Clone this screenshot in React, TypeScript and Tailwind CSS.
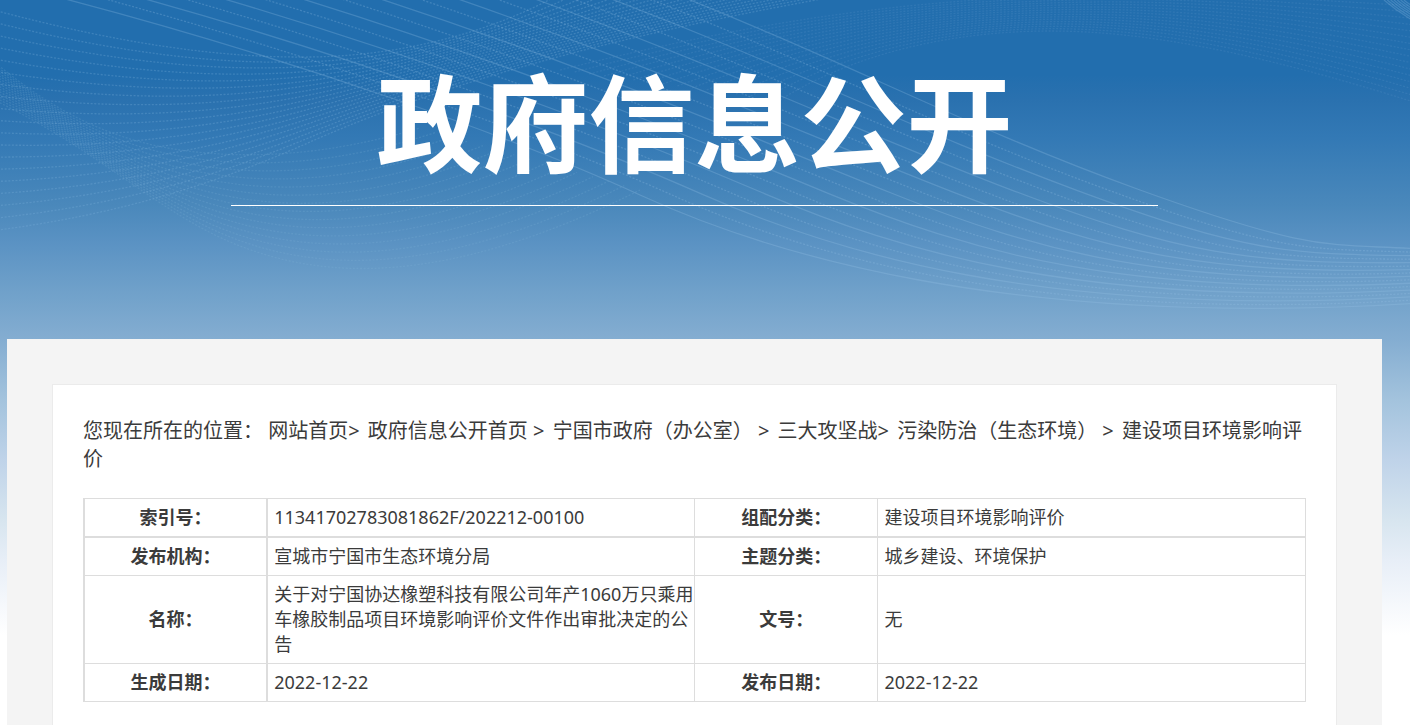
type Curve = number[];

interface Wave {
  from: Curve;
  to: Curve;
  lines: number;
  stroke: string;
  opacity: number;
  solidEvery: number;
}

// Each curve is a start point followed by one C segment and any number of S segments
const WAVES: Wave[] = [
  {
    from: [-10, 9, 120, 44, 220, 58, 310, 57, 490, 33, 560, -6],
    to: [-10, 231, 120, 215, 220, 182, 310, 142, 560, 44, 850, -6],
    lines: 19, stroke: '#7fb4dc', opacity: 0.29, solidEvery: 0,
  },
  {
    from: [640, -20, 850, 62, 960, 125, 1140, 190, 1330, 243, 1420, 249],
    to: [50, -5, 300, 60, 520, 140, 640, 195, 1000, 330, 1420, 303],
    lines: 17, stroke: '#9cc6e6', opacity: 0.26, solidEvery: 2,
  },
  {
    from: [-10, 58, 50, 110, 110, 140, 180, 150, 330, 155, 420, 128],
    to: [-10, 98, 100, 150, 160, 215, 240, 246, 440, 290, 640, 190],
    lines: 15, stroke: '#8cbbe0', opacity: 0.18, solidEvery: 0,
  },
  {
    from: [780, 100, 860, 50, 960, 31, 1050, 31, 1250, 50, 1420, 104],
    to: [560, 70, 760, 20, 900, 2, 1050, -4, 1300, 0, 1420, 6],
    lines: 16, stroke: '#6fa3d2', opacity: 0.18, solidEvery: 0,
  },
  {
    from: [1384, 0, 1392, 7, 1400, 13, 1412, 20],
    to: [1404, 0, 1406, 2, 1408, 3, 1412, 6],
    lines: 7, stroke: '#8cbbe0', opacity: 0.3, solidEvery: 1,
  },
];

const CRUMBS = [
  { label: '网站首页', sep: '> ' },
  { label: '政府信息公开首页', sep: ' > ' },
  { label: '宁国市政府（办公室）', sep: ' > ' },
  { label: '三大攻坚战', sep: '> ' },
  { label: '污染防治（生态环境）', sep: ' > ' },
  { label: '建设项目环境影响评价', sep: '' },
];

const ROWS = [
  ['索引号：', '11341702783081862F/202212-00100', '组配分类：', '建设项目环境影响评价'],
  ['发布机构：', '宣城市宁国市生态环境分局', '主题分类：', '城乡建设、环境保护'],
  ['名称：', '关于对宁国协达橡塑科技有限公司年产1060万只乘用车橡胶制品项目环境影响评价文件作出审批决定的公告', '文号：', '无'],
  ['生成日期：', '2022-12-22', '发布日期：', '2022-12-22'],
];

function curvePath(wave: Wave, i: number) {
  const t = i / (wave.lines - 1);
  const p = wave.from.map((n, k) => (n + (wave.to[k] - n) * t).toFixed(1));
  let d = `M${p[0]} ${p[1]}C${p.slice(2, 8).join(' ')}`;
  for (let k = 8; k < p.length; k += 4) d += `S${p.slice(k, k + 4).join(' ')}`;
  return d;
}

function Waves() {
  return (
    <svg className="absolute inset-x-0 top-0 h-[339px] w-full" viewBox="0 0 1410 339" preserveAspectRatio="xMidYMin slice" fill="none" aria-hidden="true">
      {WAVES.map((wave, w) => (
        <g key={w} stroke={wave.stroke} strokeOpacity={wave.opacity}>
          {Array.from({ length: wave.lines }, (_, i) => (
            <path key={i} d={curvePath(wave, i)} strokeWidth="1.3"
              strokeDasharray={wave.solidEvery && i % wave.solidEvery === 0 ? undefined : '2 1.6'} />
          ))}
        </g>
      ))}
    </svg>
  );
}

export default function App() {
  return (
    <div className="relative flex min-h-screen flex-col bg-white bg-[linear-gradient(#226eae_0px,#226eae_75px,#2a71af_100px,#3379b5_138px,#4a88bb_205px,#5a92c3_242px,#70a1ca_292px,#84add1_339px,#a3c3dd_400px,#bfd3e9_460px,#d7e5ef_520px,#e7eef7_560px,#ffffff_635px)] bg-no-repeat pr-[28px] pl-[7px] font-['Noto_Sans','Noto_Sans_CJK_SC',sans-serif] text-[#3b3b3b]">
      <Waves />
      <header className="relative flex h-[339px] flex-col items-center text-white">
        <h1 className="mt-[42px] mb-[11px] font-['Noto_Sans_CJK_SC',sans-serif] text-[106px] leading-[152px] font-bold">政府信息公开</h1>
        <div className="w-full max-w-[927px] border-t border-white" />
      </header>

      <main className="relative flex flex-1 flex-col bg-[#f4f4f4] px-[45px] pt-[45px]">
        <div className="flex-1 border border-b-0 border-[#ebebeb] bg-white px-[30px] pt-[32px]">
          <nav aria-label="您现在所在的位置" className="text-xl leading-[28px]">
            <span>您现在所在的位置：</span>{' '}
            {CRUMBS.map(c => (
              <span key={c.label}>
                <a href="#" className="hover:text-[#226eae]">{c.label}</a>
                {c.sep && <span className="mr-[3px]">{c.sep}</span>}
              </span>
            ))}
          </nav>

          <table className="mt-[25px] w-full table-fixed border-collapse text-lg leading-[25px]">
            <colgroup>
              <col className="w-[15%]" />
              <col className="w-[35%]" />
              <col className="w-[15%]" />
              <col className="w-[35%]" />
            </colgroup>
            <tbody>
              {ROWS.map(([nameA, valueA, nameB, valueB]) => (
                <tr key={nameA} className="first:border-b-2 first:border-[#dddddd]">
                  <th scope="row" className="border border-l-2 border-[#dddddd] py-[6px] font-bold">{nameA}</th>
                  <td className="border border-l-2 border-[#dddddd] py-[6px] pl-[6px]">{valueA}</td>
                  <th scope="row" className="border border-[#dddddd] py-[6px] font-bold">{nameB}</th>
                  <td className="border border-[#dddddd] py-[6px] pl-[6px]">{valueB}</td>
                </tr>
              ))}
            </tbody>
          </table>
        </div>
      </main>
    </div>
  );
}
